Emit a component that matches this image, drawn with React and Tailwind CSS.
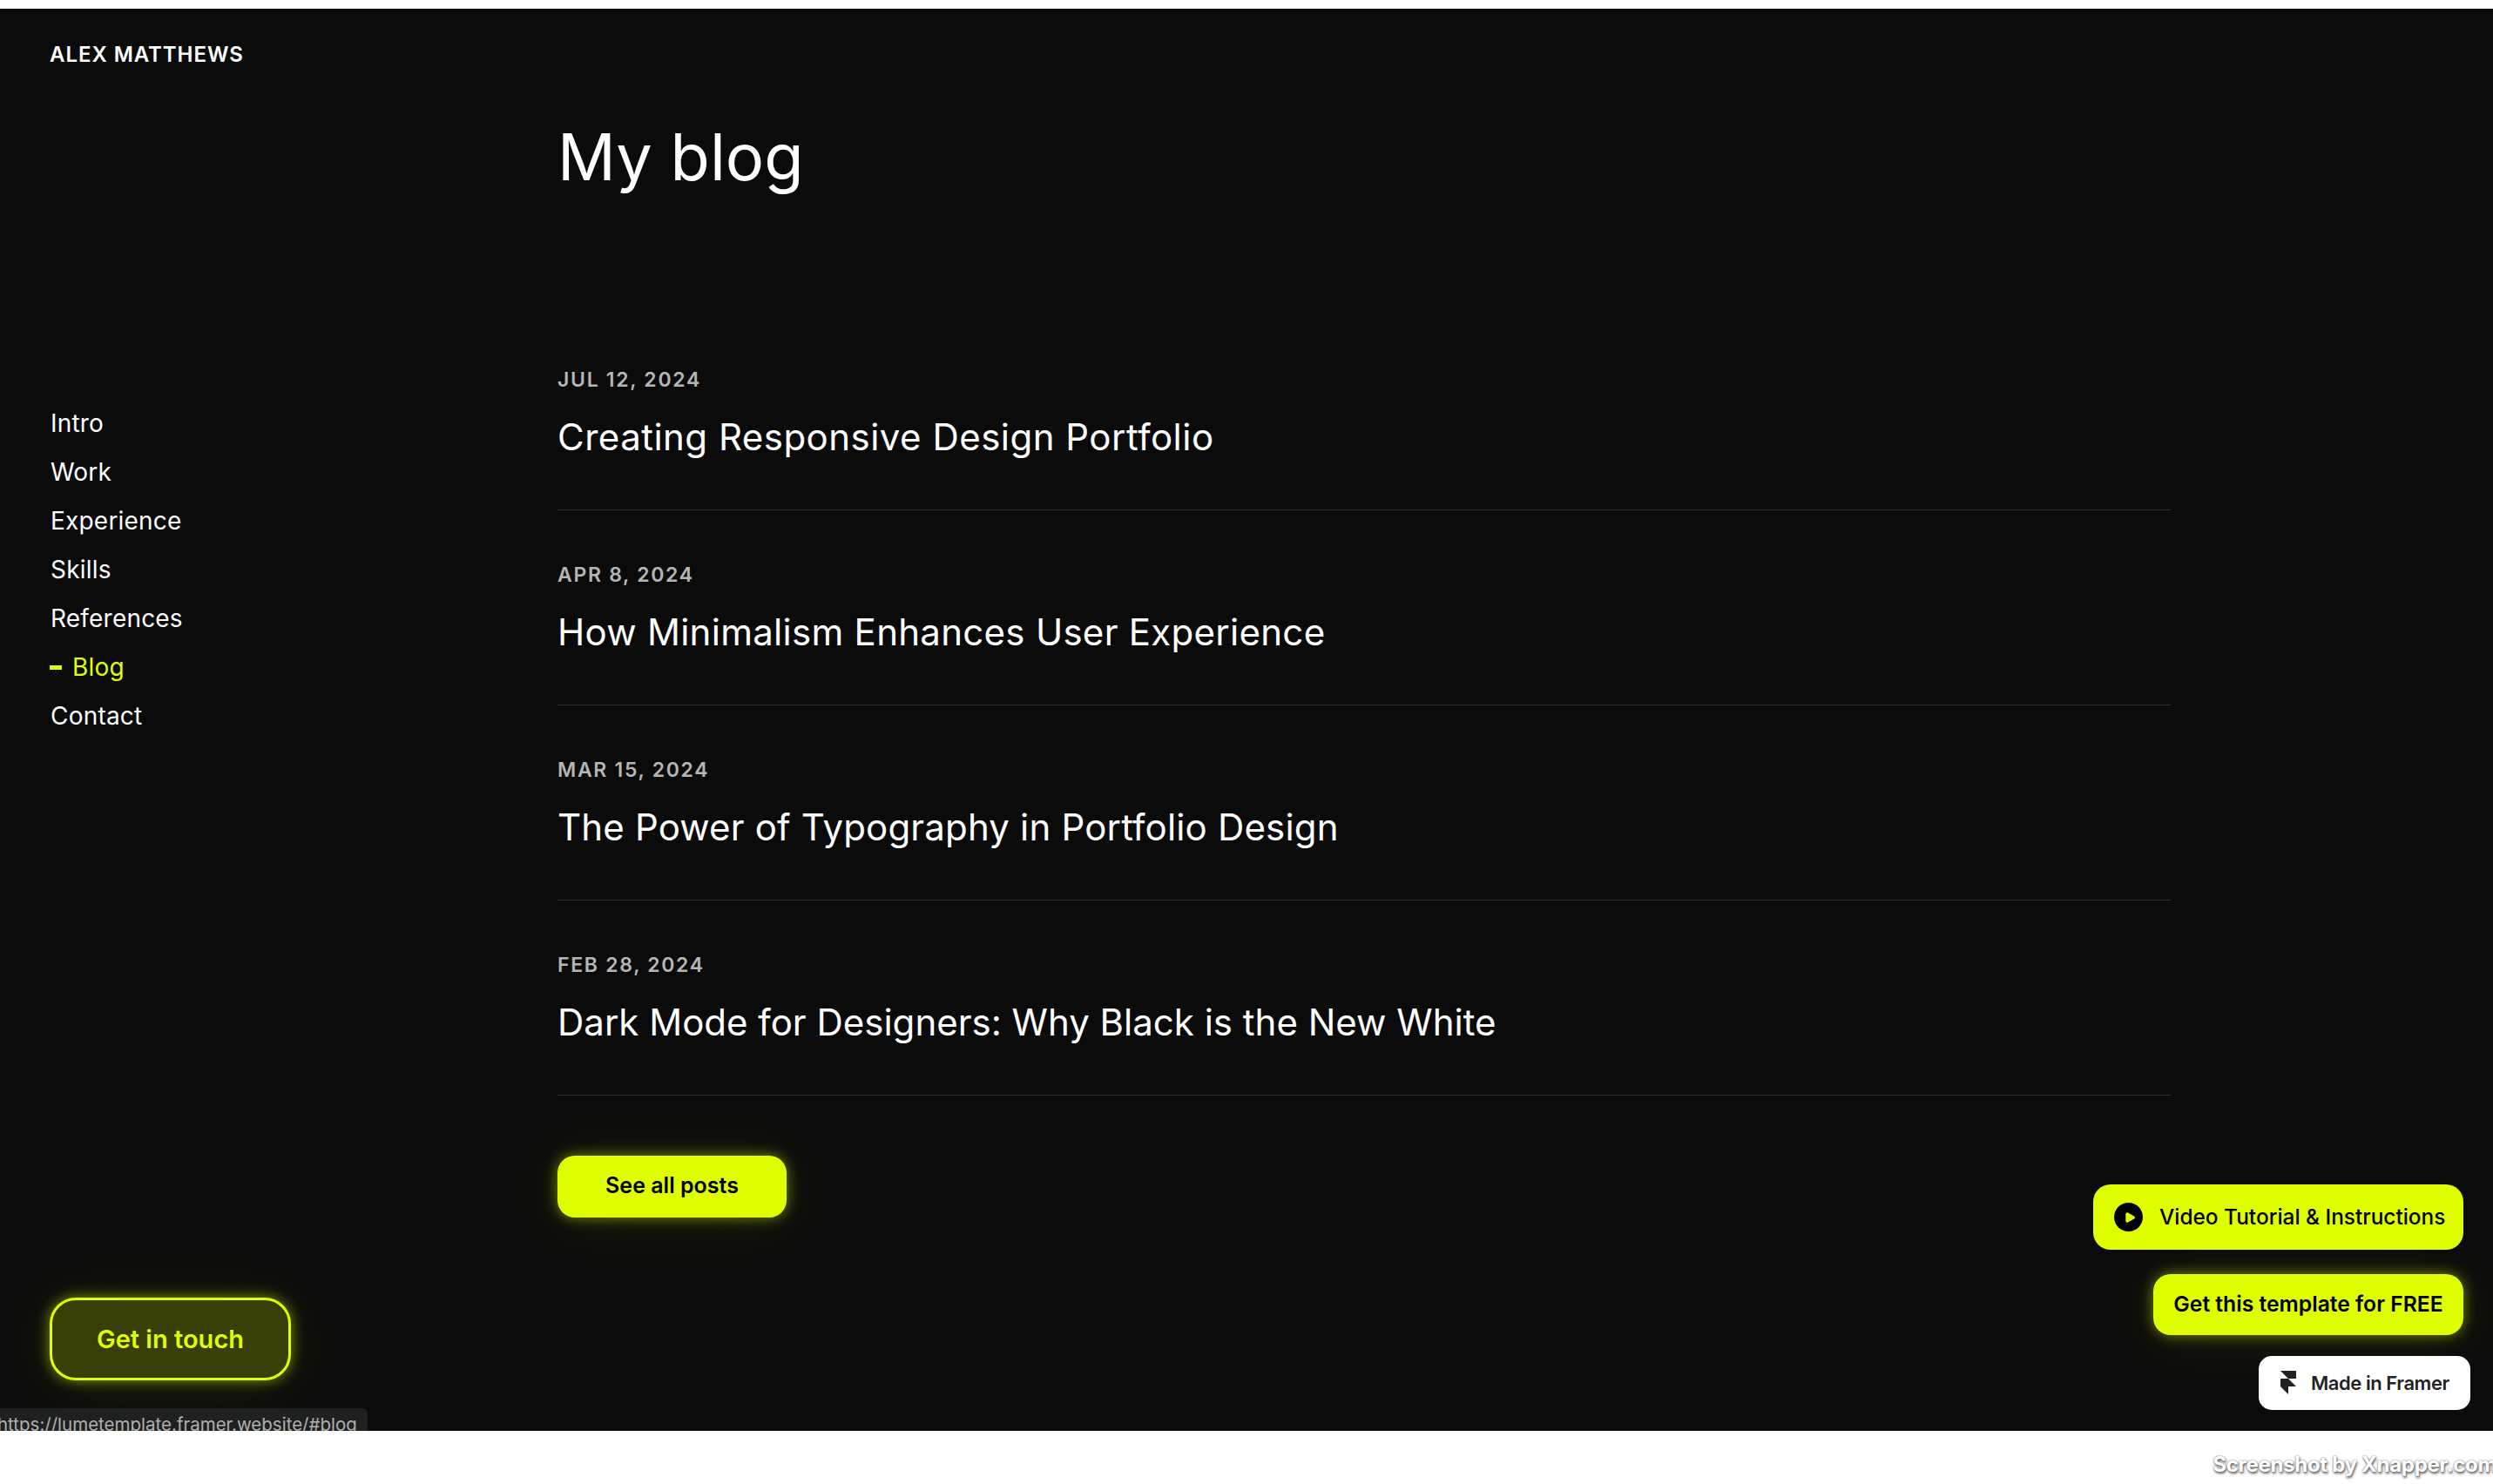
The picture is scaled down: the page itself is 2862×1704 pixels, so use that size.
import { Play } from 'lucide-react';

const navItems = ['Intro', 'Work', 'Experience', 'Skills', 'References', 'Blog', 'Contact'];

const posts = [
  { date: 'JUL 12, 2024', title: 'Creating Responsive Design Portfolio', tracking: 'tracking-[0.48px]' },
  { date: 'APR 8, 2024', title: 'How Minimalism Enhances User Experience', tracking: 'tracking-[0.28px]' },
  { date: 'MAR 15, 2024', title: 'The Power of Typography in Portfolio Design', tracking: 'tracking-[0.17px]' },
  { date: 'FEB 28, 2024', title: 'Dark Mode for Designers: Why Black is the New White', tracking: 'tracking-normal' },
];

const poppins = "font-['Inter',sans-serif]";

export default function App() {
  return (
    <div className={`flex h-[1704px] w-full flex-col overflow-hidden bg-white ${poppins}`}>
      <div className="h-[10px] shrink-0" />

      <div className="relative flex h-[1633px] shrink-0 overflow-hidden bg-[#0b0b0b] text-white">
        <aside className="flex w-[640px] shrink-0 flex-col pl-[57px]">
          <div className="mt-[38px] text-[24px] leading-[30px] font-semibold tracking-[0.95px]">ALEX MATTHEWS</div>

          <nav className="mt-[388px] flex flex-col gap-[16px] pl-[1px]">
            {navItems.map((item) =>
              item === 'Blog' ? (
                <a key={item} className="flex h-[40px] items-center gap-[12px] text-[28px] leading-[40px] tracking-[0.2px] text-[#dfff00]">
                  <span className="-ml-[1px] h-[5px] w-[14px] bg-[#dfff00]" />
                  {item}
                </a>
              ) : (
                <a key={item} className="h-[40px] text-[28px] leading-[40px] tracking-[0.2px]">
                  {item}
                </a>
              ),
            )}
          </nav>

          <button className="mt-[648px] h-[95px] w-[277px] rounded-[30px] border-[3px] border-[#dfff00] bg-[#3a3f08] text-[29px] font-semibold text-[#dfff00] shadow-[0_0_16px_rgba(223,255,0,0.55),0_4px_70px_rgba(223,255,0,0.1)]">
            Get in touch
          </button>
        </aside>

        <main className="w-[1852px] shrink-0">
          <h1 className="mt-[128px] mb-[140px] text-[74px] leading-[84px] font-normal">My blog</h1>

          {posts.map((post) => (
            <article key={post.title} className="border-b border-[#2f2f2f] pt-[61px] pb-[53px]">
              <div className="text-[23px] leading-[26px] font-semibold tracking-[1.7px] text-[#b5b5b5]">{post.date}</div>
              <h2 className={`mt-[23px] text-[42px] leading-[60px] font-normal ${post.tracking}`}>{post.title}</h2>
            </article>
          ))}

          <button className="mt-[69px] h-[71px] w-[263px] rounded-[20px] bg-[#dfff00] pb-[2px] text-[25px] font-semibold text-black shadow-[0_0_16px_rgba(223,255,0,0.5),0_4px_70px_rgba(223,255,0,0.1)]">
            See all posts
          </button>
        </main>

        <div className="absolute bottom-0 left-0 h-[26px] w-[422px] overflow-hidden rounded-tr-[6px] bg-[#1f2120] text-[20.5px] leading-[37px] whitespace-nowrap text-[#b0b0b0]">
          <span className="-ml-[3px] inline-block">https://lumetemplate.framer.website/#blog</span>
        </div>

        <div className="absolute right-[26px] bottom-[24px] flex flex-col items-end">
          <a className="mr-[8px] flex h-[75px] w-[425px] items-center gap-[19px] rounded-[20px] bg-[#dfff00] pl-[24px] text-[24.4px] font-medium text-black">
            <span className="flex h-[33px] w-[33px] items-center justify-center rounded-full bg-black">
              <Play size={14} className="ml-[2px] fill-[#dfff00] text-[#dfff00]" />
            </span>
            Video Tutorial &amp; Instructions
          </a>
          <a className="mt-[28px] mr-[8px] flex h-[70px] w-[356px] items-center justify-center rounded-[20px] bg-[#dfff00] text-[24.7px] font-semibold text-black shadow-[0_0_16px_rgba(223,255,0,0.5),0_4px_70px_rgba(223,255,0,0.1)]">
            Get this template for FREE
          </a>
          <a className="mt-[24px] flex h-[62px] w-[243px] items-center gap-[16px] rounded-[15px] bg-white pl-[24px] text-[22px] font-semibold tracking-[-0.45px] text-[#222]">
            <svg width="20" height="28" viewBox="0 0 20 28" className="fill-[#222]">
              <path d="M1 0h18v9h-9zM1 9h9l9 9H1zM1 18h9v9z" />
            </svg>
            Made in Framer
          </a>
        </div>
      </div>

      <div className="flex flex-1 items-center justify-end overflow-hidden pt-[17px]">
        <span className="mr-[-4px] text-[24px] font-bold tracking-[-0.3px] whitespace-nowrap text-white [text-shadow:0_0_2px_#666,1px_2px_3px_#555]">
          Screenshot by Xnapper.com
        </span>
      </div>
    </div>
  );
}
